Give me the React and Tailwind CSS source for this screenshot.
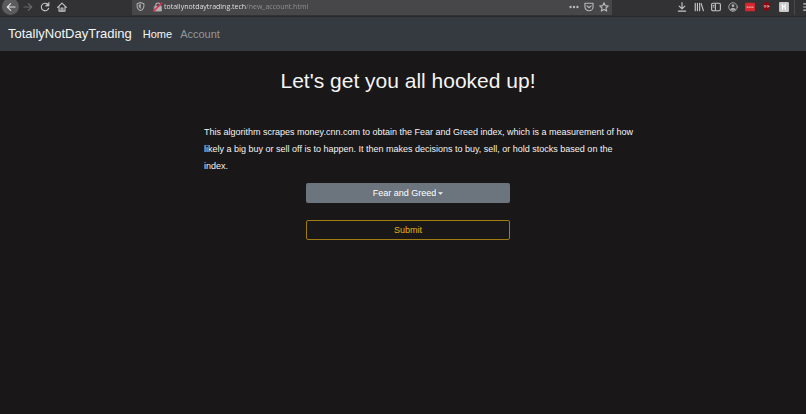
import { useState } from 'react';

const algorithms = [
  {
    id: 'fear-and-greed',
    name: 'Fear and Greed',
    description:
      'This algorithm scrapes money.cnn.com to obtain the Fear and Greed index, which is a measurement of how likely a big buy or sell off is to happen. It then makes decisions to buy, sell, or hold stocks based on the index.'
  }
];

function Icon({ children, className = 'size-[10px]' }) {
  return (
    <svg
      viewBox="0 0 16 16"
      className={className}
      fill="none"
      stroke="currentColor"
      strokeWidth="1.8"
      strokeLinecap="round"
      strokeLinejoin="round"
      aria-hidden="true"
    >
      {children}
    </svg>
  );
}

function ToolButton({ label, className = 'text-[#c4c4c6]', children }) {
  return (
    <button type="button" aria-label={label} className={`flex size-[17px] shrink-0 items-center justify-center ${className}`}>
      {children}
    </button>
  );
}

function BrowserBar() {
  const [url, setUrl] = useState('totallynotdaytrading.tech/new_account.html');

  return (
    <div className="flex h-[17px] items-start overflow-hidden border-b border-[#29292b] bg-[#323234]">
      <div className="-mt-[2px] flex w-[132px] shrink-0 items-center pl-[2px]">
        <ToolButton label="Back" className="rounded-full bg-[#5b5b5d] text-[#dededf]">
          <Icon>
            <path d="M14.5 8H2M7.5 2.5 2 8l5.5 5.5" />
          </Icon>
        </ToolButton>
        <ToolButton label="Forward" className="text-[#69696b]">
          <Icon>
            <path d="M1.5 8H14M8.5 2.5 14 8l-5.5 5.5" />
          </Icon>
        </ToolButton>
        <ToolButton label="Reload">
          <Icon>
            <path d="M13.8 10A6 6 0 1 1 12.5 4" />
            <path d="M14.5 1v5.5H9z" fill="currentColor" strokeWidth="1" />
          </Icon>
        </ToolButton>
        <ToolButton label="Home">
          <Icon>
            <path d="M1 8.5 8 1.8l7 6.7M3.2 7.5v7h9.6v-7" />
            <path d="M6.5 14V9.5h3V14" />
          </Icon>
        </ToolButton>
      </div>

      <div className="flex h-[15px] w-[480px] shrink-0 items-start bg-[#474749]">
        <div className="-mt-[2px] flex grow items-center">
          <ToolButton label="Tracking protection" className="text-[#b1b1b3]">
            <Icon className="size-[9px]">
              <path d="M8 1 14 3v4c0 4-2.5 6.8-6 8-3.5-1.2-6-4-6-8V3z" />
              <path d="M8 4.5v7c-1.5-1-2.5-2.5-2.5-4.5V5.2z" fill="currentColor" strokeWidth="1" />
            </Icon>
          </ToolButton>
          <ToolButton label="Connection is not secure" className="-mr-[2px] text-[#b1b1b3]">
            <Icon>
              <path d="M4.5 7V5a3.5 3.5 0 0 1 7 0v2" />
              <path d="M2.5 7h11v7.5h-11z" fill="currentColor" strokeWidth="1" />
              <path d="M1.5 14.5 14 1.5" stroke="#e22850" strokeWidth="2.4" />
            </Icon>
          </ToolButton>
          <input
            type="text"
            aria-label="Address"
            value={url}
            onChange={(e) => setUrl(e.target.value)}
            className="h-[17px] min-w-0 grow bg-[linear-gradient(90deg,#f0f0f1_82px,#949496_82px)] bg-clip-text font-['Open_Sans',sans-serif] text-[7px] text-transparent caret-white outline-none"
          />
          <ToolButton label="Page actions" className="-mr-[2px] text-[#b9b9bb]">
            <Icon>
              <g fill="currentColor" stroke="none">
                <circle cx="2.5" cy="8" r="1.9" />
                <circle cx="8" cy="8" r="1.9" />
                <circle cx="13.5" cy="8" r="1.9" />
              </g>
            </Icon>
          </ToolButton>
          <ToolButton label="Save to Pocket" className="-mr-[2px] text-[#b9b9bb]">
            <Icon>
              <path d="M1.5 2h13v5.5a6.5 6.5 0 0 1-13 0z" />
              <path d="M4.8 6.2 8 9.2l3.2-3" />
            </Icon>
          </ToolButton>
          <ToolButton label="Bookmark" className="text-[#b9b9bb]">
            <Icon>
              <path d="m8 1.3 2 4.5 4.9.5-3.7 3.3 1.1 4.9L8 12l-4.3 2.5 1.1-4.9-3.7-3.3 4.9-.5z" />
            </Icon>
          </ToolButton>
        </div>
      </div>

      <div className="-mt-[2px] flex grow items-center justify-end">
        <ToolButton label="Downloads">
          <Icon>
            <path d="M8 1v9.5M3.5 6.5 8 11l4.5-4.5M2 14.5h12" />
          </Icon>
        </ToolButton>
        <ToolButton label="Library">
          <Icon>
            <path d="M2 2v12M5.5 2v12M9 2v12M11.5 2.5l3.5 11.5" />
          </Icon>
        </ToolButton>
        <ToolButton label="Sidebars">
          <Icon>
            <rect x="1" y="2" width="14" height="12" rx="2" />
            <path d="M7 3v10M3.5 5.5h1M3.5 8h1" />
          </Icon>
        </ToolButton>
        <ToolButton label="Firefox account" className="text-[#a9a9ab]">
          <Icon>
            <circle cx="8" cy="8" r="6.8" strokeWidth="1.5" />
            <circle cx="8" cy="6" r="2.3" fill="currentColor" stroke="none" />
            <path d="M3.5 12c1-3 8-3 9 0-2 2.5-7 2.5-9 0z" fill="currentColor" stroke="none" />
          </Icon>
        </ToolButton>
        <ToolButton label="LastPass">
          <Icon>
            <rect x="1" y="2" width="14" height="12" rx="1" fill="#d9272e" stroke="#d9272e" />
            <path d="M3.5 8h.1M6.5 8h.1M9.5 8h.1M12.5 8h.1" stroke="#fff" strokeWidth="2" />
          </Icon>
        </ToolButton>
        <ToolButton label="uBlock Origin">
          <Icon className="size-[9px]">
            <path d="M8 0 14.5 2.5V8c0 4-3 6.5-6.5 8-3.5-1.5-6.5-4-6.5-8V2.5z" fill="#8e0610" stroke="none" />
            <path d="M4 6v2.5c0 1.5 2.5 1.5 2.5 0V6" stroke="#d9b7ba" strokeWidth="1.3" />
            <circle cx="10.5" cy="7.7" r="1.8" stroke="#d9b7ba" strokeWidth="1.3" />
          </Icon>
        </ToolButton>
        <ToolButton label="Honey">
          <Icon>
            <rect x="1" y="1" width="14" height="14" rx="1" fill="#c9c9ca" stroke="#c9c9ca" />
            <path d="M5.5 4v8M5.5 8.5c1-2 4.5-2 4.5 0V12M10 3.5v2" stroke="#fff" />
          </Icon>
        </ToolButton>
        <div className="ml-[2px] flex border-l border-[#49494b] pl-1">
          <ToolButton label="Menu">
            <Icon>
              <path d="M1 3h14M1 8h14M1 13h14" />
            </Icon>
          </ToolButton>
        </div>
      </div>
    </div>
  );
}

function Navbar() {
  return (
    <nav className="flex items-center bg-[#343a40] px-2 py-2">
      <a href="#" className="mr-[11px] text-[13px] leading-[18px] text-[#f4f5f5]">
        TotallyNotDayTrading
      </a>
      <a href="#home" className="mr-2 text-[11px] leading-[18px] text-[#f4f5f5]">
        Home
      </a>
      <a href="#account" className="text-[11px] leading-[18px] text-[#93979a]">
        Account
      </a>
    </nav>
  );
}

export default function App() {
  const [selected, setSelected] = useState(algorithms[0].id);
  const algorithm = algorithms.find((a) => a.id === selected);

  function handleSubmit(e) {
    e.preventDefault();
  }

  return (
    <div className="min-h-screen overflow-hidden bg-[#191717] font-['Liberation_Sans',Arial,sans-serif] text-[#f4f4f4]">
      <div className="-mr-[10px]">
        <BrowserBar />
        <Navbar />

        <main className="mx-auto w-1/2">
          <h1 className="pt-4 text-center text-[21px] leading-[28px]">Let's get you all hooked up!</h1>

          <form onSubmit={handleSubmit} className="pt-[29px]">
            <p className="-mr-6 text-[9px] leading-[17px]">{algorithm.description}</p>

            <div className="mx-auto mt-2 flex w-1/2 flex-col gap-[17px]">
              <label className="flex h-5 items-center justify-center gap-[2px] rounded-[2px] bg-[#6c757d] pt-px text-[9px]">
                <select
                  aria-label="Algorithm"
                  value={selected}
                  onChange={(e) => setSelected(e.target.value)}
                  className="field-sizing-content appearance-none bg-transparent text-white outline-none"
                >
                  {algorithms.map((a) => (
                    <option key={a.id} value={a.id} className="text-black">
                      {a.name}
                    </option>
                  ))}
                </select>
                <svg viewBox="0 0 6 3" className="h-[3px] w-[5px]" fill="currentColor" aria-hidden="true">
                  <path d="M0 0h6L3 3z" />
                </svg>
              </label>

              <button
                type="submit"
                className="h-5 rounded-[2px] border border-[#a17c12] pt-px text-[9px] text-[#e9b10c] hover:bg-[#ffc107] hover:text-[#212529]"
              >
                Submit
              </button>
            </div>
          </form>
        </main>
      </div>
    </div>
  );
}
